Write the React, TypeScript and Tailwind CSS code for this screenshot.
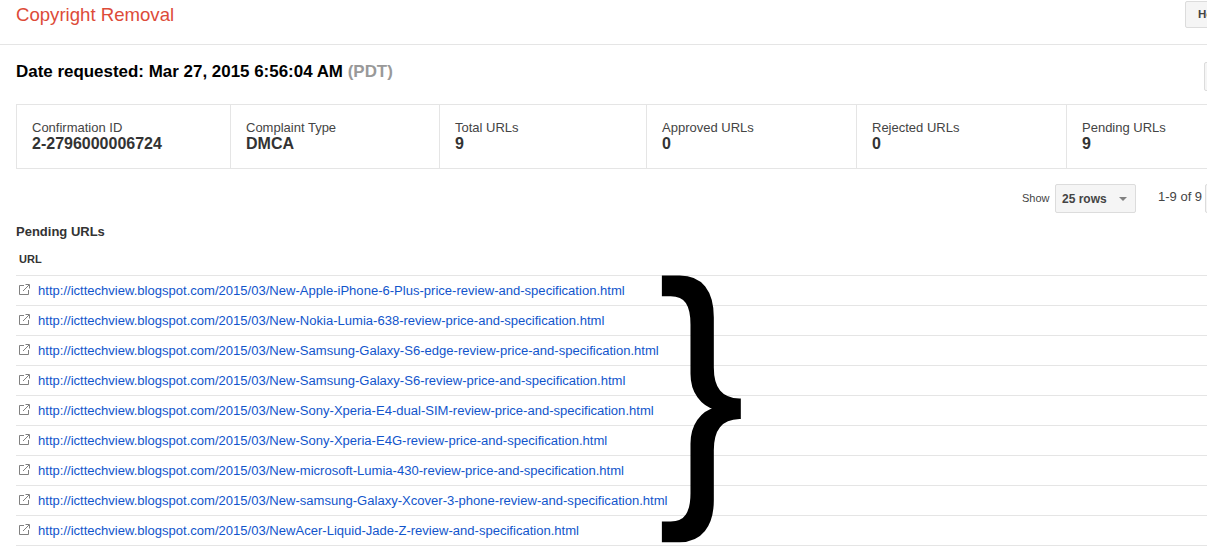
import React from "react";

const urls = [
  "New-Apple-iPhone-6-Plus-price-review-and-specification.html",
  "New-Nokia-Lumia-638-review-price-and-specification.html",
  "New-Samsung-Galaxy-S6-edge-review-price-and-specification.html",
  "New-Samsung-Galaxy-S6-review-price-and-specification.html",
  "New-Sony-Xperia-E4-dual-SIM-review-price-and-specification.html",
  "New-Sony-Xperia-E4G-review-price-and-specification.html",
  "New-microsoft-Lumia-430-review-price-and-specification.html",
  "New-samsung-Galaxy-Xcover-3-phone-review-and-specification.html",
  "NewAcer-Liquid-Jade-Z-review-and-specification.html",
];

const stats = [
  { label: "Confirmation ID", value: "2-2796000006724", w: "w-[214px]" },
  { label: "Complaint Type", value: "DMCA", w: "w-[209px]" },
  { label: "Total URLs", value: "9", w: "w-[207px]" },
  { label: "Approved URLs", value: "0", w: "w-[210px]" },
  { label: "Rejected URLs", value: "0", w: "w-[210px]" },
  { label: "Pending URLs", value: "9", w: "w-[200px]" },
];

function ExtIcon() {
  return (
    <svg width="11" height="11" viewBox="0 0 11 11" fill="none" stroke="#808080" strokeWidth="1" className="mt-px shrink-0">
      <path d="M5 1.5H0.5V10.5H9.5V6" />
      <path d="M4 7L10 1M6.5 0.5H10.5V4.5" />
    </svg>
  );
}

export default function App() {
  return (
    <div className="relative w-[1207px] h-[551px] overflow-hidden bg-white font-['Liberation_Sans',Arial,sans-serif]">
      <header className="flex h-[45px] items-start border-b border-[#e5e5e5] pl-4">
        <h1 className="flex-1 pt-[3px] text-[18.6px] leading-[24px] font-normal text-[#dd4b39]">Copyright Removal</h1>
        <button className="mt-px mr-[-40px] h-[27px] w-[62px] shrink-0 rounded-[2px] border border-[#dcdcdc] bg-[#f5f5f5] pl-[12px] text-left text-[11.5px] font-bold text-[#444]">
          Help
        </button>
      </header>

      <div className="flex h-[59px] items-start pl-4">
        <h2 className="flex-1 pt-[17px] text-[16.95px] leading-[20px] font-bold text-black">
          Date requested: Mar 27, 2015 6:56:04 AM <span className="text-[#999]">(PDT)</span>
        </h2>
        <div className="mt-[17px] mr-[-40px] h-[29px] w-[43px] shrink-0 rounded-[2px] border border-[#dcdcdc] bg-[#f5f5f5]" />
      </div>

      <div className="ml-4 flex h-[65px] w-[1240px] border border-[#e5e5e5]">
        {stats.map((s, i) => (
          <div key={s.label} className={`${s.w} shrink-0 pt-[15px] pl-[15px] ${i < 5 ? "border-r border-[#e5e5e5]" : ""}`}>
            <div className="text-[13px] leading-[15px] text-[#444]">{s.label}</div>
            <div className="text-[16px] leading-[17px] font-bold text-[#333]">{s.value}</div>
          </div>
        ))}
      </div>

      <div className="flex h-[56px] w-[1260px] items-start pt-[15px] pl-[1022px]">
        <span className="w-[33px] shrink-0 pt-[8px] text-[11px] leading-[13px] text-[#444]">Show</span>
        <div className="flex h-[29px] w-[81px] shrink-0 items-center justify-between rounded-[2px] border border-[#dcdcdc] bg-[#f5f5f5] pr-[8px] pl-[6px]">
          <span className="text-[12px] font-bold text-[#444]">25 rows</span>
          <span className="h-0 w-0 border-x-[4px] border-t-[4px] border-x-transparent border-t-[#808080]" />
        </div>
        <span className="ml-[22px] w-[47px] shrink-0 whitespace-nowrap pt-[6px] text-[13px] leading-[14px] text-[#444]">1-9 of 9</span>
        <div className="h-[29px] w-[30px] shrink-0 rounded-[2px] border border-[#dcdcdc] bg-[#f5f5f5]" />
      </div>

      <section className="ml-4">
        <h3 className="h-[20px] text-[13px] leading-[14px] font-bold text-[#333]">Pending URLs</h3>
        <div className="flex h-[31px] items-start border-b border-[#e5e5e5] pl-[3px] pt-[8px] text-[11px] leading-[13px] font-bold text-[#333]">URL</div>
        <ul>
          {urls.map((u) => (
            <li key={u} className="flex h-[30px] items-start gap-[8px] border-b border-[#e5e5e5] pl-[3px] pt-[7px]">
              <ExtIcon />
              <a className="text-[13.05px] leading-[15px] whitespace-nowrap text-[#1155cc]">
                http://icttechview.blogspot.com/2015/03/{u}
              </a>
            </li>
          ))}
        </ul>
      </section>

      <span className="absolute top-[214px] left-[659px] origin-left scale-x-[0.9] text-[283px] leading-[340px] text-black [-webkit-text-stroke:3px_#000]">{"}"}</span>
    </div>
  );
}
